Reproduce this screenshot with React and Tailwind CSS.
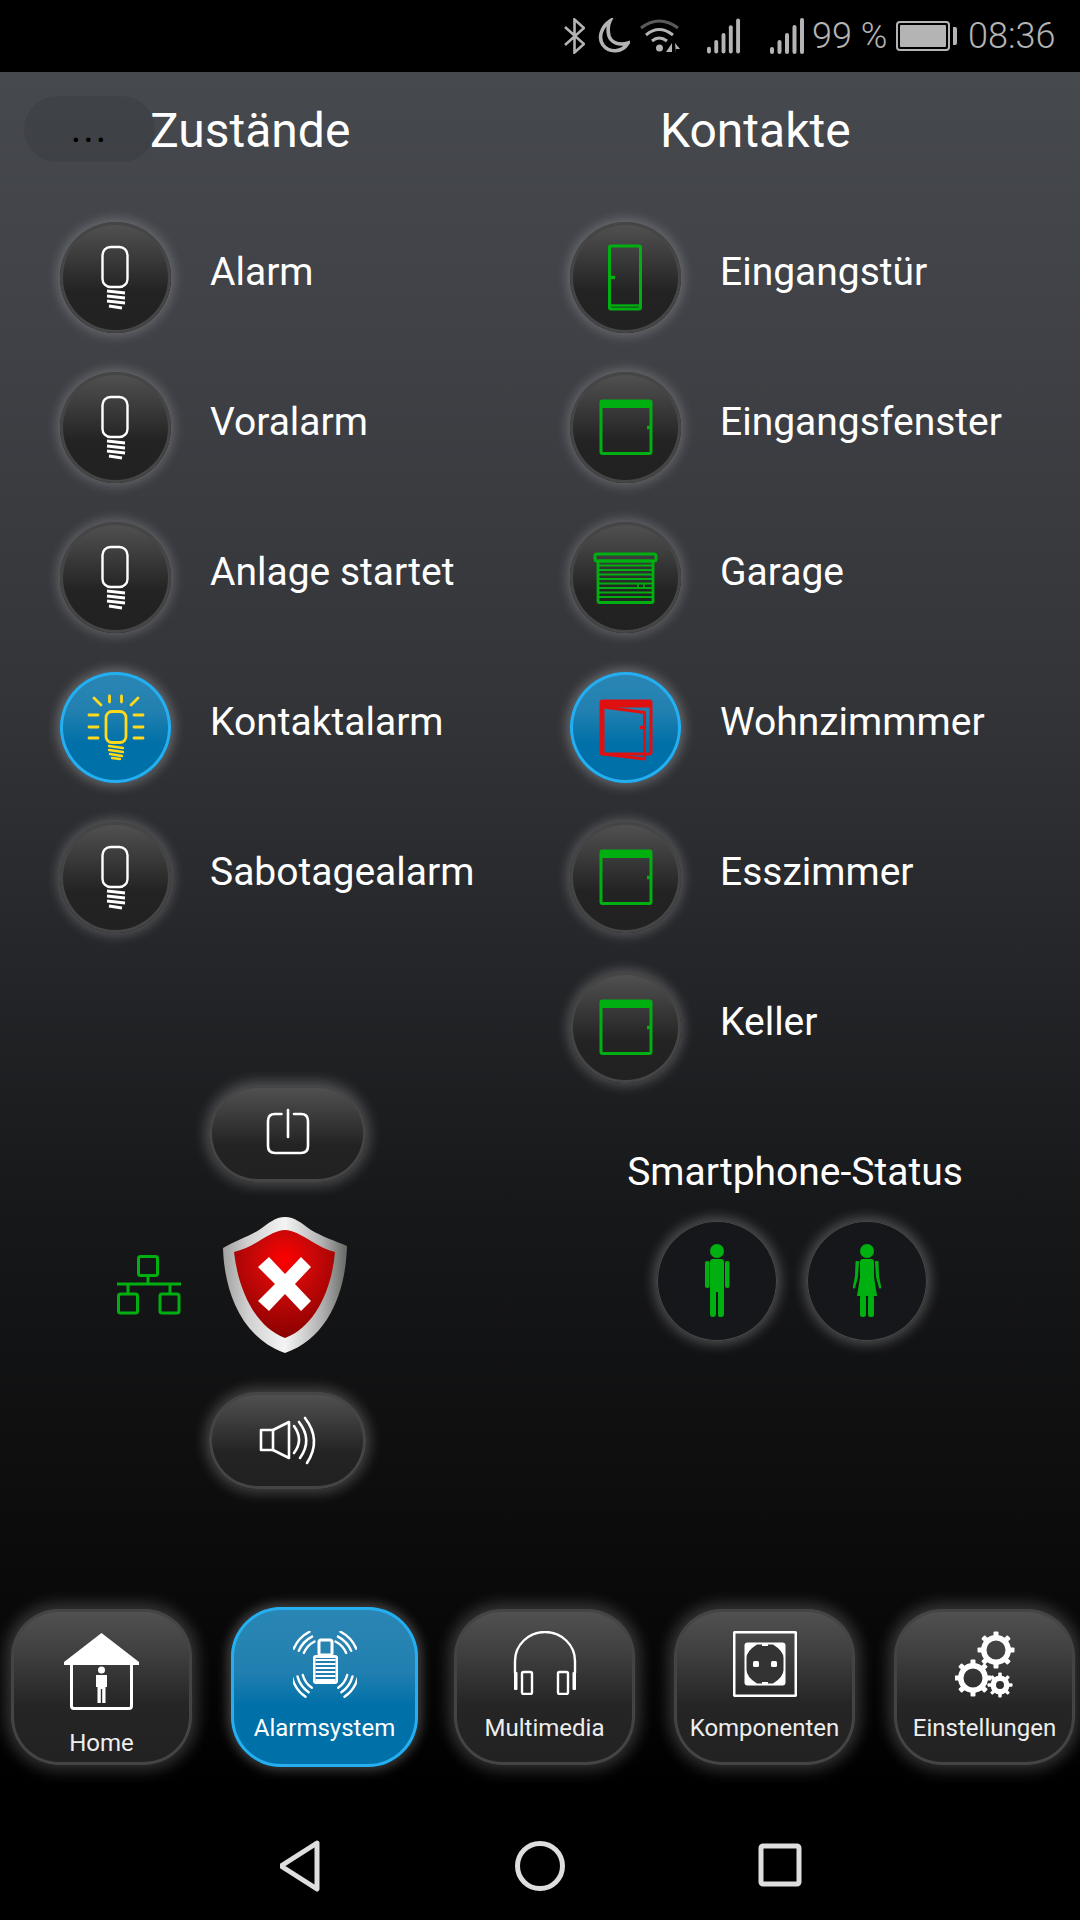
import React from "react";

const G = "#00b010";
const R = "#e01010";
const W = "#ffffff";
const Y = "#ffd91a";

function Bulb() {
  return (
    <svg width="111" height="111" viewBox="0 0 111 111" fill="none" stroke={W}>
      <rect x="42.5" y="25" width="25" height="40" rx="8" strokeWidth="2.4" />
      <path d="M47 69 L65 71 M47 74 L65 76 M47 79 L65 81 M49 84 L62 86" strokeWidth="2.8" />
    </svg>
  );
}
function BulbOn() {
  return (
    <svg width="111" height="111" viewBox="0 0 111 111" fill="none" stroke={Y} strokeLinecap="round">
      <rect x="46" y="39.5" width="20" height="31" rx="6" strokeWidth="2.8" />
      <path d="M49 74 L63 76 M49 78 L63 80 M50 82 L62 84 M52 86 L60 87" strokeWidth="2.4" />
      <path d="M29 43 H38 M29 55 H38 M29 66 H38 M74 43 H83 M74 55 H83 M74 66 H83 M49.5 24 V30 M61.5 24 V30 M34 26 L41 33 M78 26 L71 33" strokeWidth="2.8" />
    </svg>
  );
}
function Door() {
  return (
    <svg width="111" height="111" viewBox="0 0 111 111" fill="none" stroke={G} strokeWidth="3">
      <rect x="39.5" y="24" width="31" height="63" rx="1.5" />
      <path d="M40 83.5 H70" strokeWidth="2.4" />
      <path d="M40 55.5 H45" strokeWidth="3.4" />
    </svg>
  );
}
function Win() {
  return (
    <svg width="111" height="111" viewBox="0 0 111 111" fill="none" stroke={G} strokeWidth="3">
      <rect x="31" y="29" width="50" height="52.5" rx="1.5" />
      <rect x="30" y="28" width="52" height="8" rx="1" fill={G} stroke="none" />
      <path d="M77 55.5 H81" strokeWidth="3.4" />
    </svg>
  );
}
function Garage() {
  return (
    <svg width="111" height="111" viewBox="0 0 111 111" fill="none" stroke={G} strokeWidth="2">
      <rect x="25" y="32" width="61" height="7" rx="2" strokeWidth="3" />
      <rect x="28" y="39" width="55" height="41.5" rx="1" strokeWidth="2.8" />
      <path d="M28 43.5 H83 M28 48 H83 M28 52.5 H83 M28 57 H83 M28 61.5 H83 M28 66 H83 M28 70.5 H83 M28 75 H83" strokeWidth="1.9" />
      <path d="M68 62 V66 M74 62 V66" strokeWidth="1.5" />
    </svg>
  );
}
function OpenWin() {
  return (
    <svg width="111" height="111" viewBox="0 0 111 111" fill="none" stroke={R} strokeWidth="3" strokeLinejoin="round">
      <rect x="31" y="29" width="50" height="53" rx="1.5" />
      <rect x="30" y="28" width="52" height="7.5" rx="1" fill={R} stroke="none" />
      <path d="M33 35 L74.5 40.5 V87 L33 82 Z" strokeWidth="3" />
      <path d="M70 55.5 H74" strokeWidth="3.4" />
    </svg>
  );
}

function Circle({ active, children }) {
  return (
    <div
      className={
        active
          ? "w-[111px] h-[111px] shrink-0 rounded-full flex items-center justify-center bg-[linear-gradient(180deg,#2a86b4_0%,#2280b0_35%,#0070a8_65%,#0070a8_100%)] shadow-[inset_0_0_0_3px_#25aef0,0_0_12px_3px_rgba(255,255,255,0.28)]"
          : "w-[111px] h-[111px] shrink-0 rounded-full flex items-center justify-center bg-[linear-gradient(180deg,#525252_0%,#3c3c3c_30%,#232323_62%,#212121_100%)] shadow-[inset_0_0_0_3px_#454545,0_0_12px_3px_rgba(255,255,255,0.22)]"
      }
    >
      {children}
    </div>
  );
}

function Row({ icon, active, label }) {
  return (
    <div className="h-[150px] pl-[60px] flex items-center">
      <Circle active={active}>{icon}</Circle>
      <span className="ml-[39px] pb-[10px] text-[39px] text-white whitespace-nowrap">{label}</span>
    </div>
  );
}

function Pill({ children }) {
  return (
    <div className="w-[157px] h-[97px] rounded-[49px] flex items-center justify-center bg-[linear-gradient(180deg,#525252_0%,#3c3c3c_30%,#232323_62%,#212121_100%)] shadow-[inset_0_0_0_3px_#454545,0_0_13px_4px_rgba(255,255,255,0.22)]">
      {children}
    </div>
  );
}

function Power() {
  return (
    <svg width="155" height="95" viewBox="0 0 155 95" fill="none" stroke={W} strokeWidth="2.6" strokeLinecap="round">
      <path d="M71.5 28 H65 Q58 28 58 35 V60 Q58 67 65 67 H91 Q98 67 98 60 V35 Q98 28 91 28 H84" />
      <path d="M78 24 V51" strokeWidth="2.6" />
    </svg>
  );
}
function Speaker() {
  return (
    <svg width="155" height="95" viewBox="0 0 155 95" fill="none" stroke={W} strokeWidth="2.6" strokeLinejoin="round" strokeLinecap="round">
      <rect x="51" y="37" width="12" height="20" />
      <path d="M63 37 L79 29 V65 L63 57" />
      <path d="M84 33 Q94 47 84 60 M89 29 Q103 47 90 65 M95 25 Q112 47 97 70" />
    </svg>
  );
}
function Network() {
  return (
    <svg width="64" height="60" viewBox="0 0 64 60" fill="none" stroke={G} strokeWidth="3">
      <rect x="21.5" y="1.5" width="19" height="19" rx="2" />
      <path d="M31 21 V29 M0 29 H64 M11 29 V39 M53 29 V39" />
      <rect x="1.5" y="39" width="19" height="19" rx="2" />
      <rect x="43" y="39" width="19" height="19" rx="2" />
    </svg>
  );
}
function Shield() {
  return (
    <svg width="124" height="136" viewBox="0 0 124 136">
      <defs>
        <linearGradient id="sh" x1="0" y1="0" x2="1" y2="0">
          <stop offset="0" stopColor="#a0a0a0" />
          <stop offset="0.2" stopColor="#d0d0d0" />
          <stop offset="0.5" stopColor="#f4f4f4" />
          <stop offset="0.8" stopColor="#b0b0b0" />
          <stop offset="1" stopColor="#666966" />
        </linearGradient>
        <radialGradient id="rd" cx="0.5" cy="0.28" r="0.72">
          <stop offset="0" stopColor="#ff0000" />
          <stop offset="0.4" stopColor="#c90808" />
          <stop offset="1" stopColor="#8a0000" />
        </radialGradient>
      </defs>
      <path d="M62 0 C72 0 78 6 88 13 C98 19 112 24 124 29 C123 70 108 120 62 136 C16 120 1 70 0 31 C12 24 26 19 36 13 C46 6 52 0 62 0 Z" fill="url(#sh)" />
      <path d="M62 13 C70 13 78 18 88 24 C96 29 104 33 112 35 C109 72 92 110 62 121 C32 110 15 72 11 35 C20 33 28 29 36 24 C46 18 54 13 62 13 Z" fill="url(#rd)" />
      <path d="M35 50 L46 40 L62 57 L78 40 L88 50 L72 67 L88 84 L78 94 L62 77 L46 94 L35 84 L52 67 Z" fill="#fff" />
    </svg>
  );
}
function Man() {
  return (
    <svg width="120" height="120" viewBox="0 0 120 120" fill={G}>
      <circle cx="60" cy="30" r="7" />
      <path d="M53 41 Q53 38 56 38 H64 Q67 38 67 41 V93 Q67 96 64 96 H62 Q61 96 61 93 V71 H59 V93 Q59 96 56 96 Q53 96 53 93 Z" />
      <rect x="48" y="40" width="4.5" height="27" rx="2" />
      <rect x="68" y="40" width="4.5" height="27" rx="2" />
    </svg>
  );
}
function Woman() {
  return (
    <svg width="120" height="120" viewBox="0 0 120 120" fill={G}>
      <circle cx="60" cy="30" r="7" />
      <path d="M53 41 Q53 38 56 38 H64 Q67 38 67 41 V56 L70 75 H50 L53 56 Z" />
      <rect x="53" y="74" width="6" height="22" rx="2.5" />
      <rect x="61" y="74" width="6" height="22" rx="2.5" />
      <path d="M48.5 41 Q48.5 40 50 40 H51 Q52 40 52 41 L51 56 L48 67 Q47 68 46 67 L46 65 L48 55 Z" />
      <path d="M71.5 41 Q71.5 40 70 40 H69 Q68 40 68 41 L69 56 L72 67 Q73 68 74 67 L74 65 L72 55 Z" />
    </svg>
  );
}

function HomeIcon() {
  return (
    <svg width="76" height="78" viewBox="0 0 76 78" fill="none">
      <path d="M37.5 0 L75 29 V32 H0 V29 Z" fill={W} />
      <path d="M7.5 31 V73 Q7.5 75.5 10 75.5 H65 Q67.5 75.5 67.5 73 V31" stroke={W} strokeWidth="3" />
      <circle cx="37.5" cy="37" r="3.5" fill={W} />
      <path d="M32 42 H43 V54 H41.5 V70 H38.2 V56 H36.8 V70 H33.5 V54 H32 Z" fill={W} />
    </svg>
  );
}
function arc(cx, cy, r, a0, a1) {
  const p = (a) => [cx + r * Math.cos((a * Math.PI) / 180), cy + r * Math.sin((a * Math.PI) / 180)];
  const [x0, y0] = p(a0);
  const [x1, y1] = p(a1);
  return `M${x0.toFixed(2)} ${y0.toFixed(2)} A${r} ${r} 0 0 1 ${x1.toFixed(2)} ${y1.toFixed(2)}`;
}
function AlarmIcon() {
  const waves = [];
  [23, 28.5, 34].forEach((r) => {
    waves.push(
      arc(32, 31, r, -157, -117),
      arc(32, 31, r, -63, -23),
      arc(32, 38, r, 15, 55),
      arc(32, 38, r, 125, 165)
    );
  });
  return (
    <svg width="64" height="68" viewBox="0 0 64 68" fill="none">
      {waves.map((d, i) => (
        <path key={i} d={d} stroke={W} strokeWidth="2.4" strokeLinecap="round" />
      ))}
      <rect x="26" y="9" width="13" height="15" rx="2" fill="none" stroke={W} strokeWidth="3" />
      <rect x="20" y="24" width="25" height="29" rx="3" fill={W} />
      <rect x="22.5" y="27" width="20" height="23" fill="#1f7fb0" />
      <path d="M22.5 29 H42.5 M22.5 33 H42.5 M22.5 37 H42.5 M22.5 41 H42.5 M22.5 45 H42.5 M22.5 49 H42.5" stroke={W} strokeWidth="2" />
    </svg>
  );
}
function Headphones() {
  return (
    <svg width="68" height="64" viewBox="0 0 68 64" fill="none" stroke={W} strokeWidth="2.4">
      <path d="M4 42 V30 A30 29 0 0 1 64 30 V42" />
      <rect x="11" y="41" width="10" height="22" rx="1.5" />
      <rect x="47" y="41" width="10" height="22" rx="1.5" />
      <rect x="3" y="41" width="3.5" height="18" rx="1" fill={W} stroke="none" />
      <rect x="61.5" y="41" width="3.5" height="18" rx="1" fill={W} stroke="none" />
    </svg>
  );
}
function Socket() {
  return (
    <svg width="64" height="66" viewBox="0 0 64 66">
      <rect x="1.2" y="1.2" width="61.6" height="63.6" rx="1" fill="none" stroke={W} strokeWidth="2.6" />
      <rect x="11.5" y="11.5" width="41" height="43" rx="3" fill={W} />
      <path d="M24 13.5 H29 V15 H35 V13.5 H40 Q50.5 20 50.5 27 V39 Q50.5 46 40 52.5 H35 V51 H29 V52.5 H24 Q13.5 46 13.5 39 V27 Q13.5 20 24 13.5 Z" fill="#333333" />
      <rect x="20" y="30" width="6" height="6" rx="1.5" fill={W} />
      <rect x="38" y="30" width="6" height="6" rx="1.5" fill={W} />
    </svg>
  );
}
function Gear({ cx, cy, r, hole, teeth, tw, th }) {
  const t = [];
  for (let i = 0; i < teeth; i++) {
    t.push(
      <rect
        key={i}
        x={cx - tw / 2}
        y={cy - r - th}
        width={tw}
        height={th + 2}
        rx="1"
        fill={W}
        transform={`rotate(${(360 / teeth) * i} ${cx} ${cy})`}
      />
    );
  }
  const sw = r - hole;
  return (
    <g>
      {t}
      <circle cx={cx} cy={cy} r={(r + hole) / 2} fill="none" stroke={W} strokeWidth={sw} />
    </g>
  );
}
function Gears() {
  return (
    <svg width="60" height="68" viewBox="0 0 60 68">
      <Gear cx={41} cy={19} r={15} hole={9.5} teeth={8} tw={5} th={3.5} />
      <Gear cx={18} cy={47} r={15} hole={9.5} teeth={8} tw={5} th={3.5} />
      <Gear cx={45} cy={54} r={9.5} hole={4} teeth={8} tw={3.5} th={3} />
    </svg>
  );
}

function Tile({ active, label, icon, home }) {
  return (
    <div
      className={
        active
          ? "w-[187px] h-[160px] -mx-[3px] shrink-0 rounded-[50px] flex flex-col items-center pt-[24px] bg-[linear-gradient(180deg,#2a86b4_0%,#2280b0_40%,#0070a8_62%,#0070a8_100%)] shadow-[inset_0_0_0_3px_#25aef0,0_0_12px_3px_rgba(255,255,255,0.26)]"
          : `w-[181px] h-[156px] shrink-0 rounded-[48px] flex flex-col items-center ${home ? "pt-[24px] mr-[3px]" : "pt-[22px]"} bg-[linear-gradient(180deg,#525252_0%,#3e3e3e_30%,#252525_62%,#222222_100%)] shadow-[inset_0_0_0_3px_#444444,0_0_16px_5px_rgba(255,255,255,0.2)]`
      }
    >
      <div className={home ? "h-[78px]" : "h-[68px]"}>{icon}</div>
      <span
        className={`text-[24px] leading-[28px] whitespace-nowrap ${active ? "text-white" : "text-[#eeeeee]"} ${
          home ? "mt-[18px]" : "mt-[15px]"
        }`}
      >
        {label}
      </span>
    </div>
  );
}

function Signal({ w }) {
  return (
    <svg width={w} height="36" viewBox="0 0 35 36" fill="#b4b4b4">
      <rect x="0" y="29" width="4" height="7" rx="2" />
      <rect x="7.5" y="22" width="4" height="14" rx="2" />
      <rect x="15" y="15" width="4" height="21" rx="2" />
      <rect x="22.5" y="7" width="4" height="29" rx="2" />
      <rect x="30" y="0" width="4" height="36" rx="2" />
    </svg>
  );
}

function StatusBar() {
  const c = "#b4b4b4";
  return (
    <div className="h-[72px] bg-black flex items-center pl-[564px] text-[#b4b4b4] text-[36px] font-light">
      <svg width="21" height="36" viewBox="0 0 21 36" fill="none" stroke={c} strokeWidth="2.6">
        <path d="M1 9 L20 26 L10.5 34.5 V1.5 L20 10 L1 27" />
      </svg>
      <svg className="ml-[12px]" width="33" height="36" viewBox="0 0 33 36" fill="none" stroke={c} strokeWidth="3.6">
        <path d="M13 3 C4 9 1 20 6 27 C12 35 25 35 31 25 C21 28 14 24 12 18 C10.5 12 11 7 13 3 Z" />
      </svg>
      <svg className="ml-[10px]" width="41" height="36" viewBox="0 0 41 36" fill="none">
        <path d="M1 10 Q19 -4 38 10" stroke="#5a5a5a" strokeWidth="3" />
        <path d="M6 17 Q19 6 33 17 M12 23 Q19 17 27 23" stroke={c} strokeWidth="3" />
        <circle cx="19.5" cy="30" r="3.5" fill={c} />
        <path d="M32 25 V34 H26 Z M35 25 L40 31 H36 V35 Z" fill={c} />
      </svg>
      <div className="ml-[26px] flex"><Signal w={34} /></div>
      <div className="ml-[29px] flex"><Signal w={35} /></div>
      <span className="ml-[7px] w-[73px] whitespace-nowrap leading-none">99 %</span>
      <div className="ml-[11px] flex items-center">
        <div className="w-[54px] h-[30px] rounded-[4px] border-2 border-[#b4b4b4] p-[2px]">
          <div className="w-full h-full bg-[#b4b4b4] rounded-[1px]" />
        </div>
        <div className="ml-[3px] w-[4px] h-[18px] rounded-r-[2px] bg-[#b4b4b4]" />
      </div>
      <span className="ml-[11px] leading-none whitespace-nowrap">08:36</span>
    </div>
  );
}

export default function App() {
  return (
    <div className="w-[1080px] h-[1920px] bg-black overflow-hidden relative font-['Roboto',sans-serif]">
      <StatusBar />
      <div className="h-[1718px] flex flex-col bg-[linear-gradient(180deg,#46494e_0%,#3f4146_16%,#333438_37%,#17181a_66%,#0a0a0a_88%,#000000_100%)]">
        <div className="grid grid-cols-[510px_570px] h-[1520px]">
          <div className="flex flex-col">
            <div className="h-[130px] pl-[150px] pt-[25px] text-[48px] leading-[68px] text-white">Zustände</div>
            <Row icon={<Bulb />} label="Alarm" />
            <Row icon={<Bulb />} label="Voralarm" />
            <Row icon={<Bulb />} label="Anlage startet" />
            <Row icon={<BulbOn />} active label="Kontaktalarm" />
            <Row icon={<Bulb />} label="Sabotagealarm" />
            <div className="mt-[133px] ml-[209px]">
              <Pill><Power /></Pill>
            </div>
            <div className="mt-[35px] pl-[117px] flex items-center">
              <Network />
              <div className="ml-[42px] flex"><Shield /></div>
            </div>
            <div className="mt-[39px] ml-[209px]">
              <Pill><Speaker /></Pill>
            </div>
          </div>
          <div className="flex flex-col">
            <div className="h-[130px] pl-[150px] pt-[25px] text-[48px] leading-[68px] text-white">Kontakte</div>
            <Row icon={<Door />} label="Eingangstür" />
            <Row icon={<Win />} label="Eingangsfenster" />
            <Row icon={<Garage />} label="Garage" />
            <Row icon={<OpenWin />} active label="Wohnzimmmer" />
            <Row icon={<Win />} label="Esszimmer" />
            <Row icon={<Win />} label="Keller" />
            <div className="mt-[42px] text-center text-[39px] leading-[56px] text-white">Smartphone-Status</div>
            <div className="mt-[21px] flex justify-center gap-[30px] pr-[6px]">
              <div className="w-[120px] h-[120px] rounded-full bg-[#15171a] shadow-[inset_0_0_0_1px_#4a4a4a,0_0_13px_3px_rgba(255,255,255,0.27)]"><Man /></div>
              <div className="w-[120px] h-[120px] rounded-full bg-[#15171a] shadow-[inset_0_0_0_1px_#4a4a4a,0_0_13px_3px_rgba(255,255,255,0.27)]"><Woman /></div>
            </div>
          </div>
        </div>
        <div className="mt-[15px] pl-[11px] flex items-center gap-[39px]">
          <Tile home icon={<HomeIcon />} label="Home" />
          <Tile active icon={<AlarmIcon />} label="Alarmsystem" />
          <Tile icon={<Headphones />} label="Multimedia" />
          <Tile icon={<Socket />} label="Komponenten" />
          <Tile icon={<Gears />} label="Einstellungen" />
        </div>
      </div>
      <div className="h-[130px] pl-[40px] pt-[22px] flex items-center justify-center bg-black">
        <svg width="560" height="60" viewBox="0 0 560 60" fill="none" stroke="#dedede" strokeWidth="5" strokeLinejoin="round">
          <path d="M37 7 L1 30 L37 53 Z" />
          <circle cx="260" cy="30" r="22.5" />
          <rect x="481" y="10" width="38" height="38" rx="2" />
        </svg>
      </div>
      <div className="absolute left-[24px] top-[96px] w-[131px] h-[66px] rounded-[33px] bg-[rgba(0,0,0,0.08)] flex items-center justify-center text-[40px] leading-[66px] tracking-[2px] text-black">
        <span>...</span>
      </div>
    </div>
  );
}
